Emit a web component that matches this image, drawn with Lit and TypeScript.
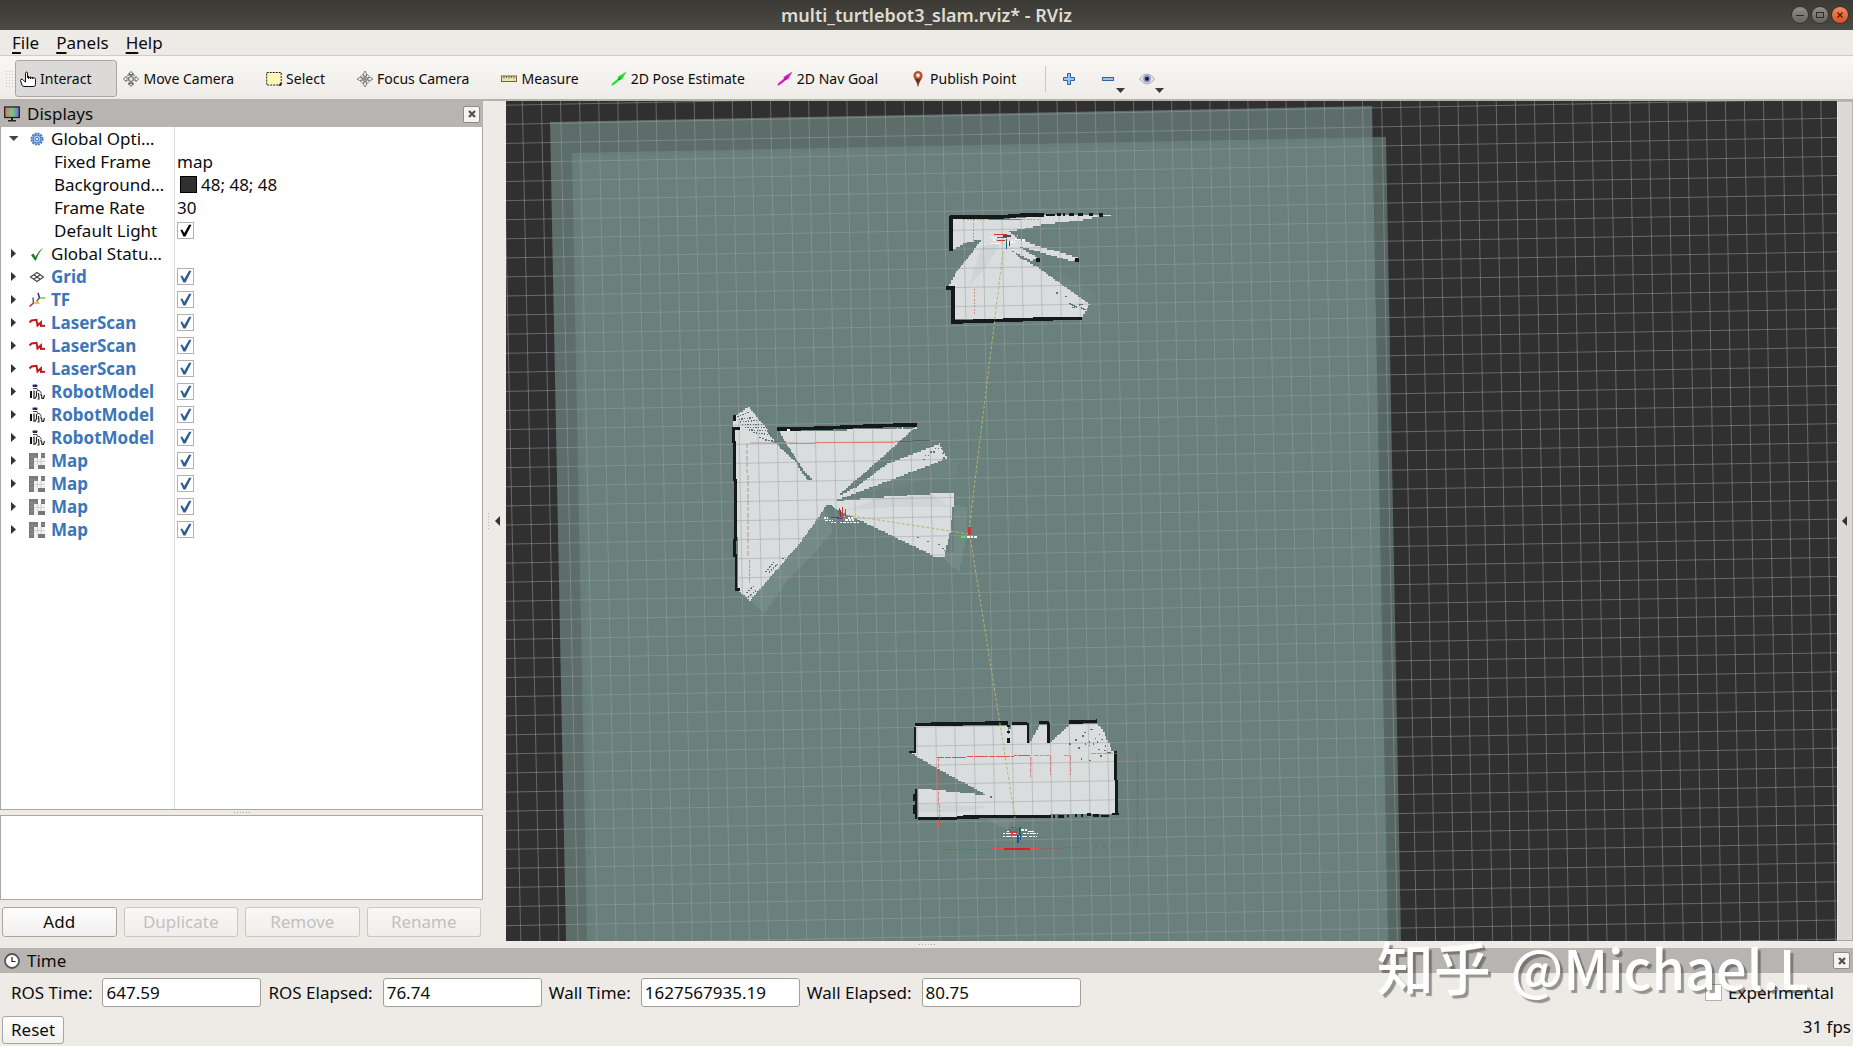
import { LitElement, html, svg, css, nothing, type TemplateResult } from "lit";
import { customElement, property } from "lit/decorators.js";

type Row = {
  name: string;
  icon?: string;
  arrow?: "open" | "closed";
  child?: boolean;
  display?: boolean;
  value?: string;
  swatch?: boolean;
  check?: boolean;
};

const ICONS: Record<string, TemplateResult> = {
  hand: svg`<path d="M5.500 9V2.200Q5.500 1 6.500 1Q7.500 1 7.500 2.200V6.500L15 7Q15.500 7 15.500 8.500V13.500Q15.500 15.500 13.500 15.500H4Q2.500 15.500 2 14L.5 9.500Q.5 8 2 8L3.500 9.500L5.500 11V4" fill="#fff" stroke="#111"/><path d="M8.500 5V8M10.500 5.500V8M12.500 6V8" stroke="#111" fill="none"/>`,
  move: svg`<path d="M8 .5L5.500 3H7V5H9V3H10.500ZM8 15.500L5.500 13H7V11H9V13H10.500ZM.5 8L3 5.500V7H13V5.500L15.500 8L13 10.500V9H3V10.500ZM4 4.500Q8 2 12 4.500M5 12Q8 14 11 12" fill="#fff" stroke="#555" stroke-width=".9"/><circle cx="8" cy="8" r="2.500" fill="#ddd" stroke="#666"/>`,
  select: svg`<rect x=".7" y="1.500" width="14.500" height="12.500" fill="#fdf6b4" stroke="#222" stroke-dasharray="2 1"/><path d="M15.500 11V14.500H12Z" fill="#111"/>`,
  focus: svg`<circle cx="8" cy="8" r="5" fill="none" stroke="#888"/><circle cx="8" cy="8" r="2.500" fill="#eee" stroke="#777"/><path d="M8 0L9.500 2.500V5H6.500V2.500ZM8 16L9.500 13.500V11H6.500V13.500ZM0 8L2.500 6.500H5V9.500H2.500ZM16 8L13.500 6.500H11V9.500H13.500Z" fill="#e8e8e6" stroke="#777" stroke-width=".9"/><path d="M8 6V10M6 8H10" stroke="#666"/>`,
  measure: svg`<rect x=".5" y="5" width="15" height="5.500" fill="#ece3a6" stroke="#6d6645"/><path d="M3 5V7.500M5.500 5V7M8 5V7.500M10.500 5V7M13 5V7.500" stroke="#6d6645"/>`,
  pose: svg`<path d="M.5 15L1 12.500L7 7.500L6.500 6L15.500 .5L11 8.500L9.500 8.500L4 13Z" fill="#22dd33"/><path d="M7 9L10 6L9 9Z" fill="#0a7a1a"/>`,
  goal: svg`<path d="M.5 15L1 12.500L7 7.500L6.500 6L15.500 .5L11 8.500L9.500 8.500L4 13Z" fill="#d61fc0"/><path d="M7 9L10 6L9 9Z" fill="#84107a"/>`,
  pin: svg`<path d="M8 16Q7 11.500 4.500 8Q3 5.500 3.500 3.500Q4.500 0 8 0Q11.500 0 12.500 3.500Q13 5.500 11.500 8Q9 11.500 8 16Z" fill="#b04f33"/><path d="M8 16Q7.500 11 5 8H11Q8.500 11 8 16Z" fill="#6f2d20"/><circle cx="8" cy="4.300" r="2" fill="#fff" stroke="#d98a70"/>`,
  plus: svg`<path d="M6.500 2.500H9.500V6.500H13.500V9.500H9.500V13.500H6.500V9.500H2.500V6.500H6.500Z" fill="#9cc3e8" stroke="#2e62a6"/>`,
  minus: svg`<rect x="2.500" y="6.500" width="11" height="3" fill="#9cc3e8" stroke="#2e62a6"/>`,
  eye: svg`<path d="M.5 8Q4 3 8 3Q12 3 15.500 8Q12 13 8 13Q4 13 .5 8Z" fill="#e6e6ea" stroke="#a9a9b4"/><circle cx="8" cy="7.800" r="3.800" fill="#8c93c9"/><circle cx="8" cy="7.800" r="2" fill="#16183c"/>`,
  monitor: svg`<defs><linearGradient id="scr"><stop offset="0" stop-color="#e07070"/><stop offset=".5" stop-color="#7fc77f"/><stop offset="1" stop-color="#6b6be0"/></linearGradient></defs><rect x=".7" y="1" width="14.600" height="10.500" fill="url(#scr)" stroke="#222" stroke-width="1.300"/><path d="M7 12H9V14H12V15.500H4V14H7Z" fill="#222"/>`,
  clock: svg`<circle cx="8" cy="8" r="7" fill="#fff" stroke="#555" stroke-width="1.800"/><path d="M8 4V8.500H11.500" fill="none" stroke="#222" stroke-width="1.200"/>`,
  gear: svg`<circle cx="8" cy="8" r="5.600" fill="#9cc0ea" stroke="#3f74b8" stroke-width="1.800" stroke-dasharray="1.800 1.130"/><circle cx="8" cy="8" r="4" fill="#a9c9ee" stroke="#4a7fc4"/><circle cx="8" cy="8" r="1.600" fill="#fff" stroke="#3f74b8"/>`,
  ok: svg`<path d="M2 9L4.500 7.500L6.500 11Q9 5 14.500 1.500Q9 7.500 7 14.500H6Z" fill="#1f7a2a"/>`,
  grid: svg`<path d="M1.500 8L8 3.500L14.500 8L8 12.500ZM4.700 5.800L11.300 10.200M11.300 5.800L4.700 10.200" fill="none" stroke="#444" stroke-width="1.100"/>`,
  tf: svg`<path d="M9 1L10.500 6" stroke="#2424a0" stroke-width="1.500"/><path d="M10.500 6H16" stroke="#32d032" stroke-width="1.300"/><path d="M10.500 6L7.500 9.500" stroke="#9a3a2a" stroke-width="1.300"/><path d="M4 5.500L4.500 11" stroke="#3a3a90" stroke-width="1.300"/><path d="M4.500 11H9.500L8 9" stroke="#c9c22a" stroke-width="1.300" fill="none"/><path d="M4.500 11L.5 14.500" stroke="#c02020" stroke-width="1.500"/>`,
  laser: svg`<path d="M.5 7.500L2.500 5.500L7.500 4.800L8.500 10.500L12 7.200L12 11L16 10.800" fill="none" stroke="#c01818" stroke-width="1.900"/>`,
  robot: svg`<rect x="3.500" y=".5" width="5" height="2.500" rx="1" fill="#26265c"/><path d="M4 4.500H8L8.500 6.500H10.500L12.500 9.500" fill="none" stroke="#444" stroke-width="1"/><path d="M1 7H3V14H1Z" fill="#111"/><path d="M5 6.500V15M7.500 7V12L6 14.500M9.500 9L10 14.500M8.500 15H10.500M11.500 10Q13 11 13 14.500H14.500L15.500 11" fill="none" stroke="#222" stroke-width="1.200"/>`,
  map: svg`<path d="M0 0H9V5H5V16H0Z" fill="#777"/><path d="M12 0H16V5H12ZM9 12H16V16H9Z" fill="#777"/><path d="M5 5H16V12H9V16H5Z" fill="#f1f1f1"/><path d="M0 4H9M0 8H5M0 12H5M3 0V16M6 0V5M12 2.500H16" stroke="#999" stroke-width=".6"/><path d="M8.500 5V12M12 5V12M5 8.500H16" stroke="#ccc" stroke-width=".8"/>`,
};

const icon = (name: string) =>
  html`<svg class="icon" viewBox="0 0 16 16" width="16" height="16" aria-hidden="true">${ICONS[name]}</svg>`;

const display = (name: string, iconName: string): Row => ({
  name, icon: iconName, arrow: "closed", display: true, check: true,
});

const ROWS: Row[] = [
  { name: "Global Opti…", icon: "gear", arrow: "open" },
  { name: "Fixed Frame", child: true, value: "map" },
  { name: "Background…", child: true, value: "48; 48; 48", swatch: true },
  { name: "Frame Rate", child: true, value: "30" },
  { name: "Default Light", child: true, check: true },
  { name: "Global Statu…", icon: "ok", arrow: "closed" },
  display("Grid", "grid"),
  display("TF", "tf"),
  ...[1, 2, 3].map(() => display("LaserScan", "laser")),
  ...[1, 2, 3].map(() => display("RobotModel", "robot")),
  ...[1, 2, 3, 4].map(() => display("Map", "map")),
];

const TOOLS: [string, string][] = [
  ["hand", "Interact"], ["move", "Move Camera"], ["select", "Select"], ["focus", "Focus Camera"],
  ["measure", "Measure"], ["pose", "2D Pose Estimate"], ["goal", "2D Nav Goal"], ["pin", "Publish Point"],
];

const CLOCKS: [string, string][] = [
  ["ROS Time:", "647.59"], ["ROS Elapsed:", "76.74"], ["Wall Time:", "1627567935.19"], ["Wall Elapsed:", "80.75"],
];

/** Redraws the slanted edges of a path as steps of one occupancy cell. */
function cells(d: string, cell = 5): string {
  const tokens = d.match(/[MLHVZ]|-?\d+/g) ?? [];
  let out = "", cmd = "", x = 0, y = 0, sx = 0, sy = 0, i = 0;
  const to = (nx: number, ny: number) => {
    const dx = nx - x, dy = ny - y;
    const n = Math.max(1, Math.round(Math.min(Math.abs(dx), Math.abs(dy)) / cell));
    for (let s = 1; s <= n; s++) {
      out += `H${Math.round(x + (dx * s) / n)}V${Math.round(y + (dy * s) / n)}`;
    }
    x = nx; y = ny;
  };
  while (i < tokens.length) {
    if (/[A-Z]/.test(tokens[i])) cmd = tokens[i++];
    if (cmd === "Z") { to(sx, sy); out += "Z"; }
    else if (cmd === "H") to(+tokens[i++], y);
    else if (cmd === "V") to(x, +tokens[i++]);
    else if (cmd === "M") { x = sx = +tokens[i++]; y = sy = +tokens[i++]; out += `M${x} ${y}`; }
    else to(+tokens[i++], +tokens[i++]);
  }
  return out;
}

const base = css`
  * { box-sizing: border-box; }
  button, input { font: inherit; color: inherit; margin: 0; }
  .icon { flex: none; display: block; overflow: visible; }
  .check {
    appearance: none; flex: none; width: 17px; height: 17px; display: block; position: relative;
    background: #fff; border: 1px solid #b3b0ad; color: #000;
  }
  .check:checked::before {
    content: ""; display: block; width: 15px; height: 15px; background: currentColor;
    clip-path: polygon(16% 46%, 28% 44%, 42% 66%, 74% 12%, 90% 12%, 50% 90%, 36% 90%);
  }
`;

/** Title strip of a docked panel, with its close button. */
@customElement("dock-title")
class DockTitle extends LitElement {
  static styles = [base, css`
    :host { display: flex; align-items: center; gap: 7px; background: #b8b4b1; padding: 0 3px 0 4px; }
    .name { flex: 1; margin: 0; font-size: 17px; font-weight: 400; line-height: 24px; }
    .close {
      width: 17px; height: 17px; padding: 0; display: grid; place-items: center;
      border: 1px solid #8d8a87; border-radius: 2px; background: #f5f4f2;
    }
  `];
  @property() name = "";
  @property() icon = "";
  render() {
    return html`${icon(this.icon)}
      <h2 class="name">${this.name}</h2>
      <button class="close" aria-label=${`Close ${this.name}`}>
        <svg viewBox="0 0 8 8" width="8" height="8"><path d="M1 1L7 7M7 1L1 7" stroke="#555" stroke-width="2.400"/></svg>
      </button>`;
  }
}

/** Property tree of the displays, with the description box and the action buttons. */
@customElement("displays-panel")
class DisplaysPanel extends LitElement {
  static styles = [base, css`
    :host { display: flex; flex-direction: column; }
    .title { height: 26px; }
    .tree {
      flex: 1; border: 1px solid #aaa7a4; border-top: 0;
      background: linear-gradient(#dcdcdc, #dcdcdc) 173px 0 / 1px 100% no-repeat #fff;
    }
    table { width: 100%; border-collapse: collapse; table-layout: fixed; }
    .name-col { width: 174px; }
    td { height: 23px; padding: 0; }
    .cell { display: flex; align-items: center; height: 23px; line-height: 22px; white-space: nowrap; }
    .twist { flex: none; width: 28px; height: 23px; padding: 0 0 0 7px; border: 0; background: none; }
    .twist svg { display: block; }
    .label { margin-left: 6px; }
    .child { padding-left: 53px; }
    .display { color: #3a76b8; font-weight: 700; }
    .value { padding-left: 2px; gap: 4px; }
    .swatch { width: 17px; height: 17px; margin-left: 3px; background: #303030; border: 1px solid #000; }
    .display-check { color: #2c5c92; }
    .grip { height: 5px; display: grid; place-items: center; }
    .dots { width: 18px; height: 3px; background: radial-gradient(circle, #a5a29e 1px, transparent 1px) 0 0 / 3px 3px; }
    .about { height: 85px; border: 1px solid #aaa7a4; background: #fff; }
    .actions { display: grid; grid-template-columns: repeat(4, 1fr); gap: 7px; padding: 7px 2px 4px; }
    .actions button {
      height: 30px; padding: 0; line-height: 26px; border: 1px solid #a9a5a1; border-radius: 3px;
      background: linear-gradient(#fefefe, #f2f0ee);
    }
    .actions button:disabled { color: #c3c0bd; border-color: #c9c6c3; background: linear-gradient(#f9f8f6, #f0eeeb); }
  `];

  row(r: Row) {
    const value = r.check
      ? html`<input type="checkbox" class="check ${r.display ? "display-check" : ""}" aria-label=${r.name} checked>`
      : html`${r.swatch ? html`<span class="swatch"></span>` : nothing}${r.value ?? nothing}`;
    return html`<tr>
      <td><div class="cell ${r.child ? "child" : ""} ${r.display ? "display" : ""}">
        ${r.arrow ? html`<button class="twist" aria-label=${r.name} aria-expanded=${r.arrow === "open"}>
          <svg viewBox="0 0 11 11" width="11" height="11">${r.arrow === "open"
            ? svg`<path d="M1 3H10.500L5.700 8Z" fill="#444"/>`
            : svg`<path d="M3 1V10L8 5.500Z" fill="#333"/>`}</svg></button>${icon(r.icon!)}
          <span class="label">${r.name}</span>` : r.name}
      </div></td>
      <td><div class="cell value">${value}</div></td>
    </tr>`;
  }

  render() {
    return html`
      <dock-title class="title" name="Displays" icon="monitor"></dock-title>
      <div class="tree"><table>
        <colgroup><col class="name-col"><col></colgroup>
        <tbody>${ROWS.map((r) => this.row(r))}</tbody>
      </table></div>
      <div class="grip"><div class="dots"></div></div>
      <div class="about"></div>
      <div class="actions">
        <button>Add</button><button disabled>Duplicate</button>
        <button disabled>Remove</button><button disabled>Rename</button>
      </div>`;
  }
}

/** Top-down scene: grid, stacked occupancy maps, laser hits and TF links. */
@customElement("map-view")
class MapView extends LitElement {
  static styles = css`
    :host { display: block; position: relative; background: #303030; overflow: hidden; }
    svg.scene { position: absolute; inset: 0; width: 100%; height: 100%; display: block; }
    .map { fill: #8cb0aa; }
    .m1 { fill-opacity: 0.48; } .m2 { fill-opacity: 0.26; } .m3 { fill-opacity: 0.05; } .m4 { fill-opacity: 0.22; }
    .grid { stroke: #a0a0a4; stroke-opacity: 0.5; stroke-width: 1; fill: none; }
    .free { fill: #d9dddd; }
    .shade { fill: #7c918e; fill-opacity: 0.6; }
    .dim { fill-opacity: 0.25; }
    .tint { fill: #c6cbcb; fill-opacity: 0.5; }
    .hole { fill: #68807c; }
    .wall { fill: none; stroke: #14191a; stroke-width: 8; }
    .w11 { stroke-width: 11; } .w10 { stroke-width: 10; } .w7 { stroke-width: 7; }
    .w2 { stroke-width: 2; stroke-opacity: 0.5; }
    .spot { fill: #14191a; }
    .speck { fill: none; stroke: #5f7370; stroke-width: 4; }
    .hit { fill: none; stroke: #e05050; stroke-width: 3; }
    .faint { stroke-opacity: 0.6; }
    .dusty { fill: none; stroke: #b09a9a; stroke-width: 6; stroke-opacity: 0.5; }
    .brown { stroke: #9c5450; stroke-opacity: 0.7; }
    .link { fill: none; stroke: #b5b56a; stroke-width: 1; stroke-dasharray: 3 2; }
    .noise { fill: none; stroke: #fff; stroke-width: 4; }
    .axis { fill: none; stroke-width: 4; stroke: #5a4444; }
    .red { stroke: #d23434; } .blue { stroke: #1d4fa8; } .teal { stroke: #17705c; }
    .green { stroke: #3ef03e; stroke-width: 6; } .thick { stroke-width: 8; }
    .hot { stroke: #e01c1c; stroke-width: 7; }
  `;

  gridPath() {
    const lines: string[] = [];
    for (let i = -1; i < 72; i++) {
      lines.push(`M${(503.2 + i * 19.096).toFixed(1)} 101L${(520.8 + i * 19.057).toFixed(1)} 941`);
    }
    for (let k = -1; k < 45; k++) {
      lines.push(`M506 ${(124.3 + k * 19.08).toFixed(1)}L1837 ${(99.1 + k * 19.09).toFixed(1)}`);
    }
    return lines.join("");
  }

  render() {
    return html`<svg class="scene" viewBox="506 101 1331 840" preserveAspectRatio="xMinYMin slice" role="img" aria-label="Map view">
      <path class="map m1" d="M550 122L1372 106L1388 941H566Z"/>
      <path class="map m2" d="M572 153L1386 137L1401 941H587Z"/>
      <path class="map m3" d="M578 156L1374 141L1390 941H592Z"/>
      <path class="map m4" d="M1373 137H1386L1401 941H1388Z"/>

      <g shape-rendering="crispEdges">
        <g transform="translate(920 190) scale(.3333)">
          <path class="shade dim" d=${cells("M400 240L520 315L548 400H480Z")}/>
          <path class="free" d=${cells("M98 86L270 84L365 76L540 74L572 77L490 92L362 108L268 126L290 146L345 168L475 205L462 213L360 184L276 160L352 206L340 212L262 174L300 206L350 232L510 346L484 388L104 392V296L82 292L104 250L182 150L140 160L98 182Z")}/>
          <path class="tint" d="M185 170L240 160L200 230L145 290Z"/>
        </g>
        <g transform="translate(700 380) scale(.3333)">
          <path class="shade" d=${cells("M380 385L152 665L190 700L260 600L330 530L400 450Z")}/>
          <path class="shade dim" d=${cells("M440 350L735 240L775 250L770 285L600 320Z")}/>
          <path class="shade" d=${cells("M500 430L720 530L775 575L795 480L800 380L762 370V520Z")}/>
          <path class="free" d=${cells("M98 110L144 80L184 130L232 185L300 262L335 300L378 345L334 302L234 152L650 140L540 240L420 344L470 318L560 250L716 190L740 238L600 292L440 352L412 360L620 344L762 334V380L752 460L734 530L700 524L470 414L384 376L300 492L152 662L118 630L104 150Z")}/>
          <path class="tint" d="M450 390L530 355L700 345L752 380L600 380Z"/>
          <path class="hole" d=${cells("M234 152L262 200L300 262L336 300L322 298L290 246L236 196L200 150Z")}/>
          <path class="hole" d="M412 358H432V364H412ZM372 382L392 374L412 390L400 400H376Z"/>
        </g>
        <g transform="translate(880 690) scale(.3333)">
          <path class="free" d=${cells("M104 108L384 104V132L392 104H438L444 158L450 152L478 104H506L510 156L568 102H648L664 116L694 182L710 190V372L114 386V296L240 310L332 322L300 302L170 232L96 188L106 184Z")}/>
          <path class="tint" d="M114 340L320 350L250 366H114Z"/>
          <path class="shade" d="M320 386H400L380 420Z"/>
        </g>
      </g>

      <path class="grid" d=${this.gridPath()}/>

      <g shape-rendering="crispEdges">
        <g transform="translate(920 190) scale(.3333)">
          <path class="wall w11" d="M94 78V184M90 82L230 82L300 76H372M78 294H100V396L222 392L400 386H486"/>
          <path class="wall" d="M378 75H404M412 74H422M430 73H436M446 73H462M474 73H490M508 73H518"/>
          <path class="spot" d="M536 68H549V81H536ZM348 204H361V217H348ZM464 203H476V215H464Z"/>
          <path class="speck" d="M408 309H414M436 320H440M448 340L472 352M476 346L490 342M482 352L496 360M456 352H464"/>
          <path class="hit" d="M206 88H300"/><path class="hit faint" d="M130 88H360" stroke-dasharray="6 4"/>
          <path class="hit faint" d="M162 88V182M165 296V372" stroke-dasharray="6 4"/>
        </g>
        <g transform="translate(700 380) scale(.3333)">
          <path class="wall w11" d="M232 148L380 144L460 140L580 136H652"/>
          <path class="wall" d="M104 106V124M100 140V186H103V300H106V480H104V526H108V628H120M98 145H120"/>
          <path class="noise" d="M590 145H594M606 144H610M262 150H270"/>
          <path class="speck" d="M112 110L150 96M116 118L166 112M120 126L180 120M126 134L186 134M134 142L198 142M146 150L206 152M160 158L214 164" stroke-dasharray="4 4"/>
          <path class="speck" d="M178 172L228 188M196 180L236 186M196 576L222 548M206 578L232 552M140 640L160 618M144 652L172 628M246 536H252M688 200H694M704 206H728M674 226H686M690 216H706M670 238H676M726 220H732M730 234H736M652 472H658M682 484H688M714 494H720M726 504L736 512" stroke-dasharray="5 4"/>
          <path class="hit faint" d="M270 190L590 186"/><path class="dusty" d="M150 188H290"/>
          <path class="wall w2" d="M590 184L690 182"/>
          <path class="dusty" d="M142 190L144 530" stroke-dasharray="14 5"/>
          <path class="hit faint" d="M148 540V610" stroke-dasharray="10 3"/>
        </g>
        <g transform="translate(880 690) scale(.3333)">
          <path class="wall w11" d="M104 104L250 101L384 99M396 101H440M478 98H508M568 96L650 94"/>
          <path class="wall w7" d="M106 112V186M86 186H108M108 296V386M102 312V332M102 346V372M444 100V158M506 98V158M386 104V110M386 124V130M386 144V160"/>
          <path class="wall w10" d="M707 184V270M710 270V372"/>
          <path class="wall w10" d="M114 386H230M230 382L370 379H514"/>
          <path class="wall" d="M520 379H526M534 379H552M562 378H568M584 377H590M604 376H610M620 374H632M640 377H656M664 378H686M696 372H716"/>
          <path class="speck" d="M586 150H591M594 174H599M602 207H607M606 138H611M612 128H617M614 162H619M626 156H631M626 166H631M630 118H640M638 162H643M644 146H649M650 156H655M656 134H661M664 148H669M654 178H659M660 198H665M672 182H677M674 168H679M682 188H692M626 212H632M568 162H573M330 321H336"/>
          <path class="hit" d="M172 203L450 197" stroke-dasharray="20 2"/>
          <path class="hit faint" d="M174 203L180 480M462 198H512M552 198H574M634 190H740M452 200V260M512 198V256M573 198V256" stroke-dasharray="14 3"/>
          <path class="hit brown" d="M774 192V468" stroke-dasharray="40 3"/>
          <path class="hit" d="M176 390L180 482"/>
          <path class="hit brown" d="M190 480L340 477M470 477L600 472" stroke-dasharray="12 6"/>
          <path class="speck" d="M600 474L770 468" stroke-dasharray="5 18"/>
          <path class="hit" d="M336 477H480"/><path class="hit hot" d="M372 477H450"/>
        </g>
      </g>

      <path class="link" d="M1003 252L969 530M969 530L1015 818M969 534L846 515"/>

      <g shape-rendering="crispEdges">
        <g transform="translate(920 190) scale(.3333)">
          <path class="noise" d="M214 142H232M218 150H226M212 160H240M262 156H286M284 148H300M306 150H314M290 136H294" stroke-dasharray="8 2"/>
          <path class="axis red" d="M222 134H262M230 142H262M230 152H256"/><path class="axis" d="M248 138H272"/>
          <path class="axis teal" d="M260 148V164"/><path class="axis blue" d="M260 164V176M268 152V168"/>
        </g>
        <g transform="translate(700 380) scale(.3333)">
          <path class="noise" d="M372 414H384M376 422H400M392 428H410M432 410H440M436 420H464M444 414H460M420 428H478" stroke-dasharray="7 3"/>
          <path class="axis blue" d="M392 412H416M410 416H426"/><path class="axis" d="M422 390V412"/>
          <path class="axis red" d="M418 384V404M427 382V416M436 386V412"/>
          <path class="axis red thick" d="M809 442V464"/><path class="axis green" d="M784 470H798"/>
          <path class="noise" d="M802 471H832" stroke-dasharray="8 2"/>
        </g>
        <g transform="translate(880 690) scale(.3333)">
          <path class="noise" d="M368 430H394M380 424H390M368 440H392M400 430H412M396 440H440M424 420H440M430 430H474M444 424H462M448 440H470" stroke-dasharray="8 2"/>
          <path class="axis red" d="M392 412H412M386 418H416M390 426H412M394 434H408"/>
          <path class="axis teal" d="M420 410V436"/><path class="axis blue" d="M414 434V458M422 432V450"/>
        </g>
      </g>
    </svg>`;
  }
}

@customElement("app-root")
class AppRoot extends LitElement {
  static styles = [base, css`
    :host {
      display: flex; flex-direction: column; min-height: 100vh; position: relative; overflow: hidden;
      background: #eeebe7; color: #0c0c0c; font: 17px/24px "Noto Sans", "Open Sans", "Noto Sans CJK SC", sans-serif;
    }
    .titlebar {
      display: grid; grid-template-columns: 1fr auto 1fr; align-items: center; height: 30px;
      background: linear-gradient(#3a3934, #4c4a44); color: #dfdbd2;
    }
    .caption { grid-column: 2; margin: 0; font-size: 18px; font-weight: 600; line-height: 26px; }
    .window { display: flex; justify-content: flex-end; gap: 4px; padding-right: 5px; }
    .window button {
      width: 16px; height: 16px; padding: 0; border: 0; border-radius: 50%;
      background: linear-gradient(#8f8d85, #66645e); box-shadow: 0 0 0 1px #33322d;
    }
    .window .quit { background: linear-gradient(#f58a64, #dd4f22); }
    .window svg { display: block; }
    .menubar { display: flex; gap: 17px; height: 26px; padding: 0 12px; border-bottom: 1px solid #cfccc8; }
    .menubar button { padding: 0; border: 0; background: none; line-height: 24px; }
    .menubar u { text-decoration-thickness: 2px; text-underline-offset: 3px; }
    .toolbar {
      display: flex; align-items: center; gap: 1px; height: 45px; padding: 2px 0 0 5px; font-size: 14px;
      background: linear-gradient(#f9f7f4, #efece8); border-bottom: 2px solid #b5b2ae;
    }
    .handle { width: 9px; height: 17px; background: radial-gradient(circle, #c9c6c2 1px, transparent 1px) 0 0 / 3px 3px; }
    .tool {
      display: flex; align-items: center; gap: 4px; height: 37px; padding: 0 25px 0 4px;
      border: 1px solid transparent; border-radius: 3px; background: none; line-height: 20px; white-space: nowrap;
    }
    .active { background: #dcdad8; border-color: #aaa7a3; }
    .rule { width: 1px; height: 26px; margin: 0 10px 0 2px; background: #cbc8c4; }
    .small { display: flex; align-items: center; height: 37px; width: 38px; padding: 0 0 0 4px; border: 0; background: none; }
    .drop { align-self: flex-end; margin-bottom: 4px; }
    .main { flex: 1; display: flex; min-height: 0; }
    .dock { flex: none; width: 483px; }
    .gutter { flex: none; width: 23px; display: flex; align-items: center; gap: 3px; padding-left: 4px; }
    .vdots { width: 3px; height: 18px; background: radial-gradient(circle, #b5b2ae 1px, transparent 1px) 0 0 / 3px 3px; }
    .fold { width: 8px; height: 20px; padding: 0; border: 0; background: none; }
    .fold svg { display: block; }
    .view { flex: 1; min-width: 0; }
    .side { flex: none; width: 16px; padding: 0 0 0 2px; border: 1px solid #b9b6b3; border-left-color: #e8e5e2; border-bottom-color: #aaa7a4; background: #dcd9d7; }
    .side svg { display: block; }
    .hgrip { height: 7px; display: grid; place-items: center; }
    .hdots { width: 18px; height: 3px; background: radial-gradient(circle, #b0ada9 1px, transparent 1px) 0 0 / 3px 3px; }
    .timebar { height: 25px; }
    .clocks { display: flex; align-items: center; gap: 7px; padding: 5px 19px 0 11px; }
    .field { display: flex; align-items: center; gap: 10px; white-space: nowrap; }
    .field input { width: 159px; height: 29px; padding: 0 3px; border: 1px solid #a3a09c; border-radius: 3px; background: #fff; }
    .experimental { display: flex; align-items: center; gap: 6px; margin-left: auto; }
    .status { display: flex; justify-content: space-between; padding: 9px 2px 2px; }
    .reset {
      height: 28px; padding: 0 8px; line-height: 24px; border: 1px solid #a9a5a1; border-radius: 3px;
      background: linear-gradient(#fefefe, #f2f0ee);
    }
    .fps { line-height: 22px; }
    .watermark {
      position: absolute; right: 44px; bottom: 39px; display: flex; align-items: baseline; gap: 20px;
      font: 500 54px/80px "Noto Sans CJK SC", sans-serif;
      color: #fff; text-shadow: 3px 3px 1px rgba(60, 60, 60, 0.5); pointer-events: none; white-space: nowrap;
    }
    .site { font-size: 57px; }
  `];

  render() {
    const drop = html`<svg class="drop" viewBox="0 0 9 5" width="9" height="5"><path d="M0 0H9L4.500 5Z" fill="#3a3a3a"/></svg>`;
    return html`
      <header class="titlebar">
        <h1 class="caption">multi_turtlebot3_slam.rviz* - RViz</h1>
        <div class="window">
          <button aria-label="Minimize"><svg viewBox="0 0 16 16"><path d="M4 8.500H12" stroke="#2d2c28"/></svg></button>
          <button aria-label="Maximize"><svg viewBox="0 0 16 16"><rect x="4.500" y="5.500" width="7" height="5" fill="none" stroke="#2d2c28"/></svg></button>
          <button class="quit" aria-label="Close"><svg viewBox="0 0 16 16"><path d="M5.500 5.500L10.500 10.500M10.500 5.500L5.500 10.500" stroke="#4c1a08" stroke-width="1.300"/></svg></button>
        </div>
      </header>
      <nav class="menubar">
        <button><u>F</u>ile</button><button><u>P</u>anels</button><button><u>H</u>elp</button>
      </nav>
      <div class="toolbar" role="toolbar">
        <div class="handle"></div>
        ${TOOLS.map(([i, label], n) => html`<button class="tool ${n ? "" : "active"}">${icon(i)}${label}</button>`)}
        <div class="rule"></div>
        <button class="small" aria-label="Add tool">${icon("plus")}</button>
        <button class="small" aria-label="Remove tool">${icon("minus")}${drop}</button>
        <button class="small" aria-label="Toolbar visibility">${icon("eye")}${drop}</button>
      </div>
      <main class="main">
        <displays-panel class="dock"></displays-panel>
        <div class="gutter">
          <div class="vdots"></div>
          <button class="fold" aria-label="Hide left dock"><svg viewBox="0 0 8 20" width="8" height="20"><path d="M7 5V15L2 10Z" fill="#333"/></svg></button>
        </div>
        <map-view class="view"></map-view>
        <button class="side" aria-label="Hide right dock"><svg viewBox="0 0 8 20" width="8" height="20"><path d="M7 5V15L2 10Z" fill="#333"/></svg></button>
      </main>
      <div class="hgrip"><div class="hdots"></div></div>
      <dock-title class="timebar" name="Time" icon="clock"></dock-title>
      <div class="clocks">
        ${CLOCKS.map(([label, value]) => html`<label class="field">${label}<input type="text" readonly .value=${value}></label>`)}
        <label class="experimental"><input type="checkbox" class="check">Experimental</label>
      </div>
      <footer class="status">
        <button class="reset">Reset</button>
        <span class="fps">31 fps</span>
      </footer>
      <div class="watermark"><span class="site">知乎</span><span>@Michael.L</span></div>`;
  }
}
